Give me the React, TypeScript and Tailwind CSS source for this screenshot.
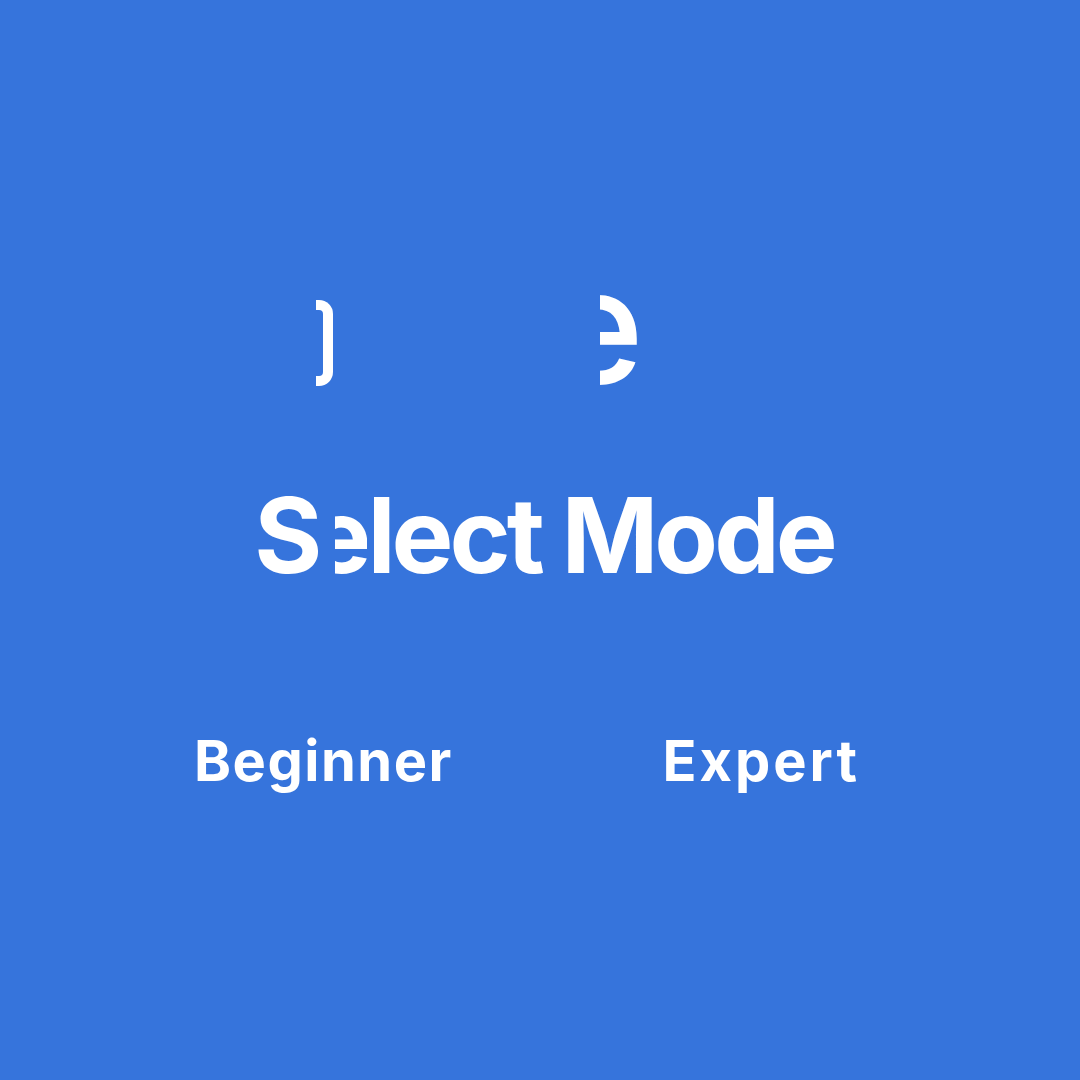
export default function App() {
  return (
    <div
      className="w-[1080px] h-[1080px] bg-[#3674dc] text-white flex flex-col items-center"
      style={{ fontFamily: "Inter, 'Liberation Sans', sans-serif" }}
    >
      {/* stray glyph fragments from the transition */}
      <div className="h-[295px]" />
      <div className="flex w-[1080px] h-[92px]">
        <div className="w-[316px]" />
        <div className="w-[17px] h-[86px] mt-[5px] border-[10px] border-l-0 border-white rounded-r-[14px]" />
        <div className="w-[267px]" />
        <div className="w-[38px] h-[92px] overflow-hidden relative">
          <span className="absolute right-[-6px] top-[-50px] text-[160px] leading-none font-medium">e</span>
        </div>
      </div>

      <div className="h-[96px]" />
      <div className="flex text-[104px] font-bold leading-none tracking-[-4px] h-[104px] ml-[8px]">
        <span>S</span>
        <span className="inline-block w-[32px] overflow-hidden ml-[17px]">
          <span className="inline-block -ml-[26px]">e</span>
        </span>
        <span>lect Mode</span>
      </div>

      <div className="h-[146px]" />
      <div className="flex w-[1080px] text-[56px] font-bold leading-none">
        <div className="w-[194px]" />
        <span className="tracking-[1.5px]">Beginner</span>
        <div className="flex-1" />
        <span className="tracking-[3px]">Expert</span>
        <div className="w-[220px]" />
      </div>
    </div>
  );
}
